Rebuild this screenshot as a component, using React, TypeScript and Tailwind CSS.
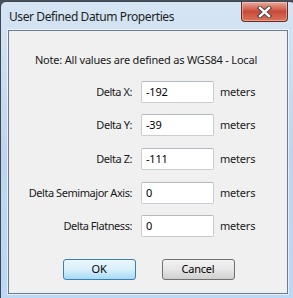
const rows = [
  { label: "Delta X:", value: "-192", top: "mt-[0px]" },
  { label: "Delta Y:", value: "-39", top: "mt-[11px]" },
  { label: "Delta Z:", value: "-111", top: "mt-[12px]" },
  { label: "Delta Semimajor Axis:", value: "0", top: "mt-[12px]" },
  { label: "Delta Flatness:", value: "0", top: "mt-[11px]" },
];

function CloseButton() {
  return (
    <div className="w-[47px] h-[20px] mr-[7px] rounded-b-[4px] border border-t-0 border-[#6b2a22] bg-gradient-to-b from-[#e9a99a] via-[#c8493a] to-[#d9735a] flex items-center justify-center shadow-[inset_0_0_0_1px_rgba(255,255,255,0.35)]">
      <svg width="15" height="12" viewBox="0 0 15 12">
        <path d="M3 2 L12 10 M12 2 L3 10" stroke="#3b3b3b" strokeWidth="4.2" strokeLinecap="square" />
        <path d="M3 2 L12 10 M12 2 L3 10" stroke="#ffffff" strokeWidth="2.4" strokeLinecap="square" />
      </svg>
    </div>
  );
}

function Field({ label, value, top }: { label: string; value: string; top: string }) {
  return (
    <div className={`flex items-center h-[22px] ${top}`}>
      <span className="w-[124px] text-right pr-[1px] tracking-[-0.45px]">{label}</span>
      <div className="ml-[8px] w-[73px] h-[22px] bg-white border border-[#c9cdd3] border-t-[#b4b8bf] rounded-[2px] flex items-center pl-[4px] text-black">
        {value}
      </div>
      <span className="ml-[6px]">meters</span>
    </div>
  );
}

export default function App() {
  return (
    <div className="w-[293px] h-[298px] bg-[#4a4f57] overflow-hidden" style={{ fontFamily: '"Noto Sans", "Open Sans", sans-serif' }}>
      <div className="w-[296px] h-[300px] mt-[1px] rounded-t-[6px] border border-[#3c4654] bg-gradient-to-b from-[#d6e5f4] via-[#bfd5ed] to-[#bcd8f5] flex flex-col">
        <div className="h-[28px] flex items-start justify-between">
          <span className="ml-[8px] mt-[8px] text-[12px] leading-[14px] tracking-[-0.4px] text-[#1e1e1e]">User Defined Datum Properties</span>
          <CloseButton />
        </div>
        <div className="ml-[7px] mr-[7px] h-[264px] bg-[#f0f0f0] border border-[#6b7a8c] shadow-[0_0_0_1px_rgba(255,255,255,0.6)] flex flex-col text-[11px] tracking-[-0.2px] text-[#1a1a1a]">
          <div className="mt-[21px] h-[16px] leading-[16px] text-center pr-[4px]">Note: All values are defined as WGS84 - Local</div>
          <div className="mt-[13px] flex flex-col">
            {rows.map(r => (
              <Field key={r.label} label={r.label} value={r.value} top={r.top} />
            ))}
          </div>
          <div className="mt-[22px] flex justify-center gap-[26px] pl-[1px]">
            <div className="w-[73px] h-[21px] rounded-[3px] border border-[#3c7fb1] bg-gradient-to-b from-[#eaf6fd] via-[#d9f0fc] to-[#a7d9f5] flex items-center justify-center text-black">OK</div>
            <div className="w-[73px] h-[21px] rounded-[3px] border border-[#707070] bg-gradient-to-b from-[#f2f2f2] via-[#e6e6e6] to-[#cfcfcf] flex items-center justify-center text-black">Cancel</div>
          </div>
        </div>
      </div>
    </div>
  );
}
